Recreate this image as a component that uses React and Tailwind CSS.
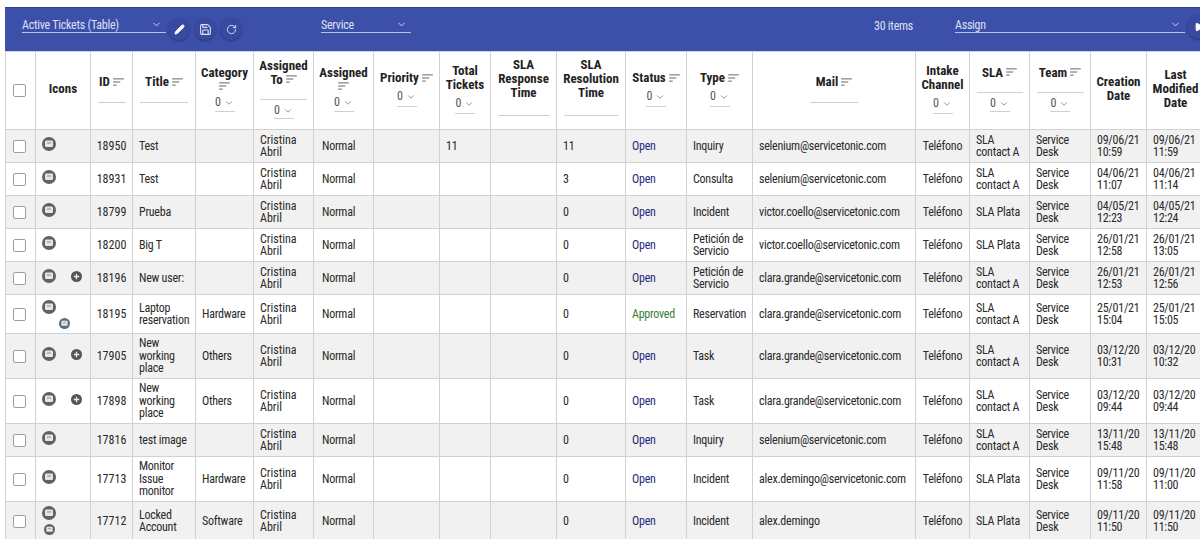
import React from "react";
import { ChevronDown, Pencil, Save, RotateCw, Play } from "lucide-react";

const SortIcon = () => (
  <svg viewBox="0 0 12 9" className="inline-block h-[8px] w-[11px] shrink-0 text-[#555]" fill="none" stroke="currentColor" strokeWidth="1">
    <path d="M0 1h12M0 4.5h8M0 8h4" />
  </svg>
);

// grey round bubble used in the Icons column
const Bubble = ({ small, tone }) => (
  <svg viewBox="0 0 14 14" className={small ? "h-[11px] w-[11px]" : "h-[14px] w-[14px]"}>
    <circle cx="7" cy="7" r="7" fill={tone || "#616161"} />
    <rect x="3" y="3.6" width="8" height="6.4" rx="1.2" fill="#e6e6e6" />
    <path d="M5 6h4" stroke="#8a8a8a" strokeWidth="1" />
  </svg>
);

const PlusDot = () => (
  <svg viewBox="0 0 12 12" className="h-[11px] w-[11px]">
    <circle cx="6" cy="6" r="6" fill="#555" />
    <path d="M6 3v6M3 6h6" stroke="#eee" strokeWidth="1.4" />
  </svg>
);

const Filter = ({ tight }) => (
  <div className={`flex w-[20px] items-center justify-center gap-[3px] border-b border-[#cfcfcf] text-[12px] font-normal tracking-normal text-[#555] ${tight ? "h-[19px] pt-[3px]" : "mt-[4px] h-[18px]"}`}>
    0
    <ChevronDown size={10} strokeWidth={1.5} />
  </div>
);

const Head = ({ lines, sort, filter, blank, blankW, blankGap, sortBelow }) => (
  <th className="border border-[#d2d2d2] p-0 pb-[3px] align-middle">
    <div className="flex flex-col items-center justify-center text-[13px] font-bold leading-[13.7px] tracking-normal text-[#222]">
      {lines.map((l, i) => (
        <div key={i} className="flex items-center gap-[3px] whitespace-nowrap">
          {l}
          {sort && !sortBelow && i === lines.length - 1 && <SortIcon />}
        </div>
      ))}
      {sortBelow && <div className="mt-[3px] flex h-[8px]"><SortIcon /></div>}
      {blank && <div className={`border-b border-[#cfcfcf] ${blankGap || "mt-[13px]"} ${blankW}`} />}
      {filter && <Filter tight={blank} />}
    </div>
  </th>
);

const Check = () => (
  <div className="mx-auto h-[13px] w-[13px] rounded-[2px] border border-[#9e9e9e] bg-white" />
);

const rows = [
  { h: "h-[33px]", id: 18950, title: ["Test"], cat: "", total: "11", res: "11", status: "Open", type: ["Inquiry"], mail: "selenium@servicetonic.com", sla: ["SLA", "contact A"], c: ["09/06/21", "10:59"], m: ["09/06/21", "11:59"] },
  { h: "h-[33px]", id: 18931, title: ["Test"], cat: "", total: "", res: "3", status: "Open", type: ["Consulta"], mail: "selenium@servicetonic.com", sla: ["SLA", "contact A"], c: ["04/06/21", "11:07"], m: ["04/06/21", "11:14"] },
  { h: "h-[33px]", id: 18799, title: ["Prueba"], cat: "", total: "", res: "0", status: "Open", type: ["Incident"], mail: "victor.coello@servicetonic.com", sla: ["SLA Plata"], c: ["04/05/21", "12:23"], m: ["04/05/21", "12:24"] },
  { h: "h-[33px]", id: 18200, title: ["Big T"], cat: "", total: "", res: "0", status: "Open", type: ["Petición de", "Servicio"], mail: "victor.coello@servicetonic.com", sla: ["SLA Plata"], c: ["26/01/21", "12:58"], m: ["26/01/21", "13:05"] },
  { h: "h-[33px]", id: 18196, icon: "plus", title: ["New user:"], cat: "", total: "", res: "0", status: "Open", type: ["Petición de", "Servicio"], mail: "clara.grande@servicetonic.com", sla: ["SLA", "contact A"], c: ["26/01/21", "12:53"], m: ["26/01/21", "12:56"] },
  { h: "h-[39px]", id: 18195, icon: "blue", title: ["Laptop", "reservation"], cat: "Hardware", total: "", res: "0", status: "Approved", type: ["Reservation"], mail: "clara.grande@servicetonic.com", sla: ["SLA", "contact A"], c: ["25/01/21", "15:04"], m: ["25/01/21", "15:05"] },
  { h: "h-[45px]", id: 17905, icon: "plus", title: ["New", "working", "place"], cat: "Others", total: "", res: "0", status: "Open", type: ["Task"], mail: "clara.grande@servicetonic.com", sla: ["SLA", "contact A"], c: ["03/12/20", "10:31"], m: ["03/12/20", "10:32"] },
  { h: "h-[45px]", id: 17898, icon: "plus", title: ["New", "working", "place"], cat: "Others", total: "", res: "0", status: "Open", type: ["Task"], mail: "clara.grande@servicetonic.com", sla: ["SLA", "contact A"], c: ["03/12/20", "09:44"], m: ["03/12/20", "09:44"] },
  { h: "h-[33px]", id: 17816, title: ["test image"], cat: "", total: "", res: "0", status: "Open", type: ["Inquiry"], mail: "selenium@servicetonic.com", sla: ["SLA", "contact A"], c: ["13/11/20", "15:48"], m: ["13/11/20", "15:48"] },
  { h: "h-[45px]", id: 17713, title: ["Monitor", "Issue", "monitor"], cat: "Hardware", total: "", res: "0", status: "Open", type: ["Incident"], mail: "alex.demingo@servicetonic.com", sla: ["SLA Plata"], c: ["09/11/20", "11:58"], m: ["09/11/20", "11:00"] },
  { h: "h-[39px]", id: 17712, icon: "brown", title: ["Locked", "Account"], cat: "Software", total: "", res: "0", status: "Open", type: ["Incident"], mail: "alex.demingo", sla: ["SLA Plata"], c: ["09/11/20", "11:50"], m: ["09/11/20", "11:50"] },
];

const Lines = ({ items }) => items.map((t, i) => <div key={i} className="whitespace-nowrap">{t}</div>);

const Td = ({ children, className }) => (
  <td className={`border border-[#d2d2d2] px-[6px] py-0 align-middle ${className || ""}`}>{children}</td>
);

const Icons = ({ icon }) => {
  if (icon === "plus") {
    return (
      <div className="-mt-[4px] flex items-center gap-[15px]">
        <Bubble />
        <PlusDot />
      </div>
    );
  }
  if (icon === "blue") {
    return (
      <div>
        <Bubble />
        <div className="ml-[17px] mt-[4px]"><Bubble small tone="#5a6c80" /></div>
      </div>
    );
  }
  if (icon === "brown") {
    return (
      <div className="-mt-[1px]">
        <Bubble />
        <div className="ml-[2px] mt-[4px]"><Bubble small tone="#6b5f5a" /></div>
      </div>
    );
  }
  return <div className="-mt-[4px]"><Bubble /></div>;
};

const widths = ["w-[30px]", "w-[55px]", "w-[42px]", "w-[63px]", "w-[58px]", "w-[60px]", "w-[60px]", "w-[66px]", "w-[51px]", "w-[66px]", "w-[69px]", "w-[61px]", "w-[66px]", "w-[163px]", "w-[54px]", "w-[60px]", "w-[61px]", "w-[56px]", "w-[58px]"];

export default function App() {
  return (
    <div className="h-[539px] w-[1200px] overflow-hidden bg-white pl-[5px] pt-[7px] font-['Roboto',sans-serif] tracking-[-0.25px] [font-stretch:75%]">
      <div className="flex h-[44px] w-[1210px] items-start border-t border-[#2f4096] bg-[#3c4fa9] pl-[17px] text-[12px] text-[#dde1f3]">
        <div className="mt-[9px] flex h-[16px] w-[144px] items-center justify-between border-b border-[#b9c2ea] pr-[4px]">
          Active Tickets (Table)
          <ChevronDown size={11} />
        </div>
        <div className="ml-[2px] mt-[10px] flex gap-[4px]">
          <div className="flex h-[22px] w-[22px] items-center justify-center rounded-full bg-[#384aa0] shadow-[0_1px_2px_rgba(0,0,0,0.3)]">
            <Pencil size={11} fill="#ffffff" color="#ffffff" />
          </div>
          <div className="flex h-[22px] w-[22px] items-center justify-center rounded-full bg-[#384aa0] shadow-[0_1px_2px_rgba(0,0,0,0.3)]">
            <Save size={13} />
          </div>
          <div className="flex h-[22px] w-[22px] items-center justify-center rounded-full bg-[#384aa0] shadow-[0_1px_2px_rgba(0,0,0,0.3)]">
            <RotateCw size={11} />
          </div>
        </div>
        <div className="ml-[79px] mt-[9px] flex h-[16px] w-[90px] items-center justify-between border-b border-[#b9c2ea] pr-[4px]">
          Service
          <ChevronDown size={11} />
        </div>
        <div className="ml-[463px] mt-[9px] w-[38px] whitespace-nowrap">30 items</div>
        <div className="ml-[43px] mt-[9px] flex h-[16px] w-[230px] items-center justify-between border-b border-[#b9c2ea] pr-[4px]">
          Assign
          <ChevronDown size={11} />
        </div>
        <div className="ml-[2px] mt-[7px] flex h-[24px] w-[24px] items-center justify-center rounded-full bg-[#384aa0] shadow-[0_1px_2px_rgba(0,0,0,0.3)]">
          <Play size={10} fill="#ffffff" color="#ffffff" />
        </div>
      </div>
      <table className="w-[1200px] table-fixed border-collapse text-[12px] leading-[12.4px] text-[#2a2a2a]">
        <colgroup>
          {widths.map((w, i) => <col key={i} className={w} />)}
        </colgroup>
        <thead>
          <tr className="h-[78px] bg-white">
            <th className="border border-[#d2d2d2] pr-[2px]"><Check /></th>
            <Head lines={["Icons"]} />
            <Head lines={["ID"]} sort blank blankW="w-[28px]" />
            <Head lines={["Title"]} sort blank blankW="w-[48px]" />
            <Head lines={["Category"]} sort sortBelow filter />
            <Head lines={["Assigned", "To"]} sort blank blankW="w-[47px]" filter />
            <Head lines={["Assigned"]} sort sortBelow filter />
            <Head lines={["Priority"]} sort filter />
            <Head lines={["Total", "Tickets"]} filter />
            <Head lines={["SLA", "Response", "Time"]} blank blankW="w-[52px]" blankGap="mt-[15px] mb-[4px]" />
            <Head lines={["SLA", "Resolution", "Time"]} blank blankW="w-[54px]" blankGap="mt-[15px] mb-[4px]" />
            <Head lines={["Status"]} sort filter />
            <Head lines={["Type"]} sort filter />
            <Head lines={["Mail"]} sort blank blankW="w-[48px]" />
            <Head lines={["Intake", "Channel"]} filter />
            <Head lines={["SLA"]} sort blank blankW="w-[46px]" filter />
            <Head lines={["Team"]} sort blank blankW="w-[47px]" filter />
            <Head lines={["Creation", "Date"]} />
            <Head lines={["Last", "Modified", "Date"]} />
          </tr>
        </thead>
        <tbody>
          {rows.map((r, i) => (
            <tr key={r.id} className={`${r.h} ${i % 2 === 0 ? "bg-[#f1f1f1]" : "bg-white"}`}>
              <Td className="!pl-0 !pr-[2px]"><Check /></Td>
              <Td><Icons icon={r.icon} /></Td>
              <Td className="!px-0 text-center tracking-normal">{r.id}</Td>
              <Td className="!pr-0"><Lines items={r.title} /></Td>
              <Td>{r.cat}</Td>
              <Td className="tracking-normal"><Lines items={["Cristina", "Abril"]} /></Td>
              <Td className="!pl-[8px]">Normal</Td>
              <Td />
              <Td>{r.total}</Td>
              <Td />
              <Td>{r.res}</Td>
              <Td className={r.status === "Open" ? "text-[#1f2a7a]" : "text-[#3a7d3a]"}>{r.status}</Td>
              <Td className="!pr-0"><Lines items={r.type} /></Td>
              <Td>{r.mail}</Td>
              <Td className="!px-0 text-center">Teléfono</Td>
              <Td><Lines items={r.sla} /></Td>
              <Td><Lines items={["Service", "Desk"]} /></Td>
              <Td className="!pr-0"><Lines items={r.c} /></Td>
              <Td className="!pr-0"><Lines items={r.m} /></Td>
            </tr>
          ))}
        </tbody>
      </table>
    </div>
  );
}
